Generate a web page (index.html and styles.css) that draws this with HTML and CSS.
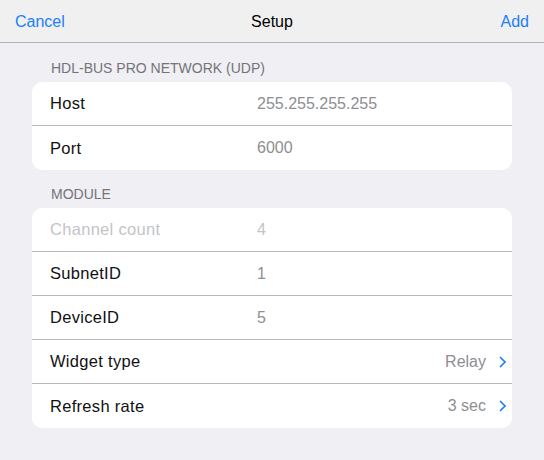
FILE: index.html
```html
<!DOCTYPE html>
<html>
<head>
<meta charset="utf-8">
<link rel="stylesheet" href="styles.css">
</head>
<body>
<div class="navbar">
  <span class="nav-btn">Cancel</span>
  <span class="nav-title">Setup</span>
  <span class="nav-btn">Add</span>
</div>
<div class="content">
  <div class="section-header">HDL-BUS PRO NETWORK (UDP)</div>
  <div class="card">
    <div class="row"><span class="label">Host</span><span class="value">255.255.255.255</span></div>
    <div class="row"><span class="label">Port</span><span class="value">6000</span></div>
  </div>
  <div class="section-header">MODULE</div>
  <div class="card">
    <div class="row disabled"><span class="label">Channel count</span><span class="value">4</span></div>
    <div class="row"><span class="label">SubnetID</span><span class="value">1</span></div>
    <div class="row"><span class="label">DeviceID</span><span class="value">5</span></div>
    <div class="row"><span class="label">Widget type</span><span class="detail">Relay</span><svg class="chev" width="7" height="12" viewBox="0 0 7 12"><path d="M1 1 L6 6 L1 11" fill="none" stroke="#1a7ff9" stroke-width="1.6"/></svg></div>
    <div class="row"><span class="label">Refresh rate</span><span class="detail">3 sec</span><svg class="chev" width="7" height="12" viewBox="0 0 7 12"><path d="M1 1 L6 6 L1 11" fill="none" stroke="#1a7ff9" stroke-width="1.6"/></svg></div>
  </div>
</div>
</body>
</html>
```
FILE: styles.css
```css
* { box-sizing: border-box; }
html, body { margin: 0; padding: 0; }
body {
  width: 544px;
  height: 460px;
  background: #efeff4;
  font-family: "Liberation Sans", Arial, sans-serif;
  overflow: hidden;
}
.navbar {
  height: 43px;
  background: #f0f0f1;
  border-bottom: 1px solid #b4b4b6;
  display: flex;
  align-items: center;
  justify-content: space-between;
  padding: 1px 15px 0 15px;
  position: relative;
}
.nav-btn {
  color: #1a7ff9;
  font-size: 16px;
}
.nav-title {
  position: absolute;
  left: 0;
  right: 0;
  text-align: center;
  font-size: 16px;
  color: #000;
  pointer-events: none;
}
.content {
  padding: 17px 32px 0 32px;
}
.section-header {
  font-size: 14px;
  color: #747479;
  padding-left: 19px;
  height: 22px;
  line-height: 16px;
}
.card {
  background: #fff;
  border-radius: 10px;
  margin-bottom: 16px;
  overflow: hidden;
}
.row {
  height: 44px;
  display: flex;
  align-items: center;
  padding: 0 6px 0 18px;
  font-size: 16px;
  border-bottom: 1px solid #b8b8bb;
}
.row:last-child { border-bottom: none; }
.label {
  width: 207px;
  color: #111;
  font-size: 16.5px;
  letter-spacing: 0.3px;
}
.value {
  color: #8e8e93;
}
.detail {
  margin-left: auto;
  color: #8e8e93;
  margin-right: 13px;
}
.chev { flex: none; }
.disabled .label, .disabled .value { color: #c4c4c8; }
```
